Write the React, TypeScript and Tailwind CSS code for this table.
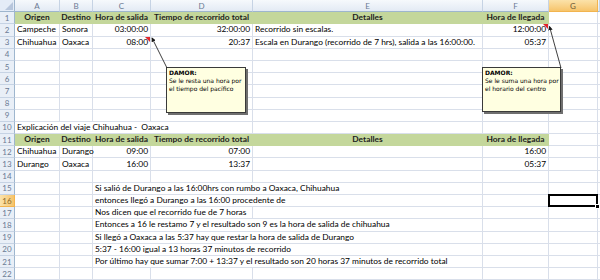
import React from "react";

type Cell = { text?: string; span?: number; align?: "l" | "r" | "c"; bold?: boolean; note?: boolean; selected?: boolean };

const GRID = "grid grid-cols-[15px_45px_33px_58px_102px_230px_66px_49px_1fr]";
const SPAN: Record<number, string> = { 1: "", 2: "col-span-2", 3: "col-span-3", 4: "col-span-4" };
const ALIGN = { l: "justify-start", r: "justify-end", c: "justify-center" };

const HEAD: Cell[] = [
  { text: "Origen", align: "c", bold: true },
  { text: "Destino", align: "c", bold: true },
  { text: "Hora de salida", align: "c", bold: true },
  { text: "Tiempo de recorrido total", align: "c", bold: true },
  { text: "Detalles", align: "c", bold: true },
  { text: "Hora de llegada", align: "c", bold: true },
];

const empty = (n: number): Cell[] => Array.from({ length: n }, () => ({}));

const ROWS: { cells: Cell[]; green?: boolean }[] = [
  { cells: [...HEAD, ...empty(2)], green: true },
  {
    cells: [
      { text: "Campeche" },
      { text: "Sonora" },
      { text: "03:00:00", align: "r" },
      { text: "32:00:00", align: "r" },
      { text: "Recorrido sin escalas." },
      { text: "12:00:00", align: "r", note: true },
      {},
      {},
    ],
  },
  {
    cells: [
      { text: "Chihuahua" },
      { text: "Oaxaca" },
      { text: "08:00", align: "r", note: true },
      { text: "20:37", align: "r" },
      { text: "Escala en Durango (recorrido de 7 hrs), salida a las 16:00:00." },
      { text: "05:37", align: "r" },
      {},
      {},
    ],
  },
  { cells: empty(8) },
  { cells: empty(8) },
  { cells: empty(8) },
  { cells: empty(8) },
  { cells: empty(8) },
  { cells: empty(8) },
  { cells: [{ text: "Explicación del viaje Chihuahua -  Oaxaca", span: 4 }, ...empty(4)] },
  { cells: [...HEAD, ...empty(2)], green: true },
  {
    cells: [
      { text: "Chihuahua" },
      { text: "Durango" },
      { text: "09:00", align: "r" },
      { text: "07:00", align: "r" },
      {},
      { text: "16:00", align: "r" },
      {},
      {},
    ],
  },
  {
    cells: [
      { text: "Durango" },
      { text: "Oaxaca" },
      { text: "16:00", align: "r" },
      { text: "13:37", align: "r" },
      {},
      { text: "05:37", align: "r" },
      {},
      {},
    ],
  },
  { cells: empty(8) },
  { cells: [{}, {}, { text: "Si salió de Durango a las 16:00hrs con rumbo a Oaxaca, Chihuahua", span: 3 }, ...empty(3)] },
  { cells: [{}, {}, { text: "entonces llegó a Durango a las 16:00 procedente de", span: 3 }, {}, { selected: true }, {}] },
  { cells: [{}, {}, { text: "Nos dicen que el recorrido fue de 7 horas", span: 2 }, ...empty(4)] },
  { cells: [{}, {}, { text: "Entonces a 16 le restamo 7 y el resultado son 9 es la hora de salida de chihuahua", span: 3 }, ...empty(3)] },
  { cells: [{}, {}, { text: "Si llegó a Oaxaca a las 5:37 hay que restar la hora de salida de Durango", span: 3 }, ...empty(3)] },
  { cells: [{}, {}, { text: "5:37 - 16:00 igual a 13 horas 37 minutos de recorrido", span: 3 }, ...empty(3)] },
  { cells: [{}, {}, { text: "Por último hay que sumar 7:00 + 13:37 y el resultado son 20 horas 37 minutos de recorrido total", span: 3 }, ...empty(3)] },
  { cells: empty(8) },
];

const LETTERS = ["A", "B", "C", "D", "E", "F", "G", ""];

function Comment({ className, lines }: { className: string; lines: string[] }) {
  return (
    <div
      className={
        "absolute z-20 border border-[#3a3a3a] bg-[#ffffe1] px-[2px] pt-[1px] text-[6px] leading-[8px] text-black shadow-[2px_2px_0_#6f6f6f] font-['DejaVu_Sans',sans-serif] " +
        className
      }
    >
      <div className="font-bold">DAMOR:</div>
      {lines.map((l) => (
        <div key={l} className="whitespace-nowrap">{l}</div>
      ))}
    </div>
  );
}

export default function App() {
  return (
    <div className="relative h-[280px] w-[600px] overflow-hidden bg-white font-['Lato',sans-serif] text-[8.4px] text-black">
      {/* column headers */}
      <div className={GRID + " h-[12.2px]"}>
        <div className="relative border-b border-r border-[#9eb6ce] bg-[#e4ecf7]">
          <svg className="absolute bottom-[1px] right-[1px]" width="8" height="8">
            <polygon points="8,0 8,8 0,8" fill="#b7c6dc" />
          </svg>
        </div>
        {LETTERS.map((l, i) => (
          <div
            key={i}
            className={
              "flex items-center justify-center border-b border-r text-[8px] leading-none " +
              (l === "G"
                ? "border-[#f2b44f] bg-gradient-to-b from-[#fbe2a9] to-[#f6c46a] text-[#6b5a3a]"
                : "border-[#c6d3e4] border-b-[#9eb6ce] bg-gradient-to-b from-[#f6f9fc] to-[#e3eaf4] text-[#6a7a93]")
            }
          >
            {l}
          </div>
        ))}
      </div>

      {ROWS.map((row, r) => (
        <div key={r} className={GRID + " h-[12.2px]"}>
          <div
            className={
              "flex items-center justify-center border-b border-r text-[8px] leading-none " +
              (r === 15
                ? "border-[#f2b44f] bg-gradient-to-r from-[#fbe2a9] to-[#f6c46a] text-[#8a6a2c]"
                : "border-[#c6d3e4] border-r-[#9eb6ce] bg-[#e9eff7] text-[#6a7a93]")
            }
          >
            {r + 1}
          </div>
          {row.cells.map((c, i) => {
            const green = row.green && i < 6;
            return (
              <div
                key={i}
                className={
                  "relative flex items-center whitespace-pre px-[2px] leading-[11px] " +
                  (SPAN[c.span ?? 1] || "") +
                  " " +
                  ALIGN[c.align ?? "l"] +
                  " " +
                  (green ? "bg-[#c4d79b] border-b border-r border-[#c4d79b]" : "border-b border-r border-[#d9dfea]") +
                  (c.bold ? " font-bold text-[#1d1d1d]" : "")
                }
              >
                {c.text}
                {c.note && (
                  <span className="absolute right-0 top-0 h-0 w-0 border-l-[5px] border-t-[5px] border-l-transparent border-t-[#e3262b]" />
                )}
                {c.selected && (
                  <>
                    <span className="absolute -left-[1px] -top-[1px] bottom-[-1px] right-[-1px] z-10 border-2 border-black" />
                    <span className="absolute -bottom-[3px] -right-[3px] z-10 h-[5px] w-[5px] border border-white bg-black" />
                  </>
                )}
              </div>
            );
          })}
        </div>
      ))}

      <svg className="pointer-events-none absolute left-0 top-0 z-30" width="600" height="280">
        <defs>
          <marker id="ah" viewBox="0 0 6 6" refX="5" refY="3" markerWidth="5" markerHeight="5" orient="auto">
            <path d="M0,0 L6,3 L0,6 z" fill="#1a1a1a" />
          </marker>
        </defs>
        <line x1="167" y1="68" x2="152" y2="38" stroke="#2a2a2a" strokeWidth="0.9" markerEnd="url(#ah)" />
        <line x1="561" y1="68" x2="549.5" y2="26.5" stroke="#2a2a2a" strokeWidth="0.9" markerEnd="url(#ah)" />
      </svg>

      <Comment className="left-[166px] top-[67px] h-[46px] w-[80px]" lines={["Se le resta una hora por", "el tiempo del pacífico"]} />
      <Comment className="left-[482px] top-[67px] h-[45px] w-[79px]" lines={["Se le suma una hora por", "el horario del centro"]} />
    </div>
  );
}
